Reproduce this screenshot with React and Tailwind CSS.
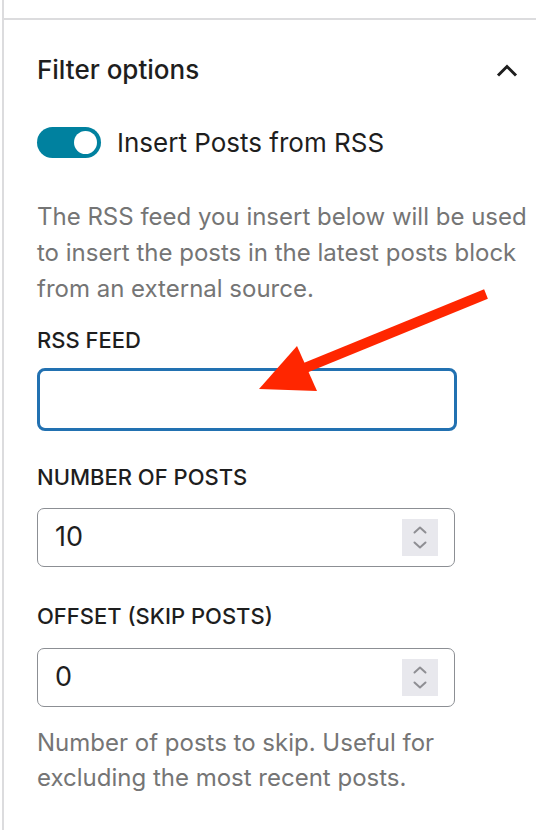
import React from "react";

function Spinner() {
  return (
    <div className="flex h-[37px] w-[36px] flex-col items-center justify-center gap-[7px] bg-[#e8e8ed]">
      <svg width="14" height="8" viewBox="0 0 14 8" fill="none">
        <path d="M1.5 6.5 L7 1.5 L12.5 6.5" stroke="#8e8e93" strokeWidth="2" strokeLinecap="round" strokeLinejoin="round" />
      </svg>
      <svg width="14" height="8" viewBox="0 0 14 8" fill="none">
        <path d="M1.5 1.5 L7 6.5 L12.5 1.5" stroke="#8e8e93" strokeWidth="2" strokeLinecap="round" strokeLinejoin="round" />
      </svg>
    </div>
  );
}

function NumberInput({ value }) {
  return (
    <div className="flex h-[59px] w-[418px] items-center justify-between rounded-[7px] border-[1.5px] border-[#8c8f94] pl-[17px] pr-[16px]">
      <span className="text-[27px] text-[#1e1e1e]">{value}</span>
      <Spinner />
    </div>
  );
}

export default function App() {
  return (
    <div
      className="relative h-[830px] w-[536px] overflow-hidden bg-white"
      style={{ fontFamily: "Inter, 'Noto Sans', sans-serif" }}
    >
      <div className="ml-[2px] flex h-full flex-col border-l-2 border-[#dcdcde]">
        <div className="h-[18px] shrink-0" />
        <div className="flex-1 border-t-2 border-[#dcdcde] pl-[33px]">
          <div className="mt-[34px] flex items-center justify-between pr-[18px]">
            <h2 className="text-[26px] font-medium leading-[32px] text-[#1e1e1e]">Filter options</h2>
            <svg width="22" height="13" viewBox="0 0 22 13" fill="none">
              <path d="M2 11.5 L11 2.5 L20 11.5" stroke="#1e1e1e" strokeWidth="3" />
            </svg>
          </div>

          <div className="mt-[38px] flex h-[37px] items-center gap-[16px]">
            <div className="relative h-[31px] w-[64px] shrink-0 rounded-full bg-[#00819f]">
              <div className="absolute left-[37px] top-[4px] h-[23px] w-[23px] rounded-full bg-white" />
            </div>
            <span className="text-[26px] leading-[37px] text-[#1e1e1e]">Insert Posts from RSS</span>
          </div>

          <p className="mt-[38px] w-[495px] text-[24px] leading-[36px] text-[#757575]">
            The RSS feed you insert below will be used to insert the posts in the latest posts block from an external source.
          </p>

          <div className="mt-[19px] text-[22px] font-medium uppercase leading-[28px] text-[#1e1e1e]">RSS FEED</div>
          <div className="mt-[14px] h-[63px] w-[420px] rounded-[8px] border-[3px] border-[#2271b1]" />

          <div className="mt-[32px] text-[22px] font-medium uppercase leading-[28px] text-[#1e1e1e]">NUMBER OF POSTS</div>
          <div className="mt-[17px]">
            <NumberInput value="10" />
          </div>

          <div className="mt-[35px] text-[22px] font-medium uppercase leading-[28px] text-[#1e1e1e]">OFFSET (SKIP POSTS)</div>
          <div className="mt-[18px]">
            <NumberInput value="0" />
          </div>

          <p className="mt-[18px] w-[440px] text-[24px] leading-[35px] text-[#757575]">
            Number of posts to skip. Useful for excluding the most recent posts.
          </p>
        </div>
      </div>

      <svg className="pointer-events-none absolute left-0 top-0" width="536" height="830" viewBox="0 0 536 830">
        <line x1="486" y1="294" x2="300" y2="370" stroke="#ff2600" strokeWidth="10" />
        <polygon points="259,389 297,346 317,391" fill="#ff2600" />
      </svg>
    </div>
  );
}
